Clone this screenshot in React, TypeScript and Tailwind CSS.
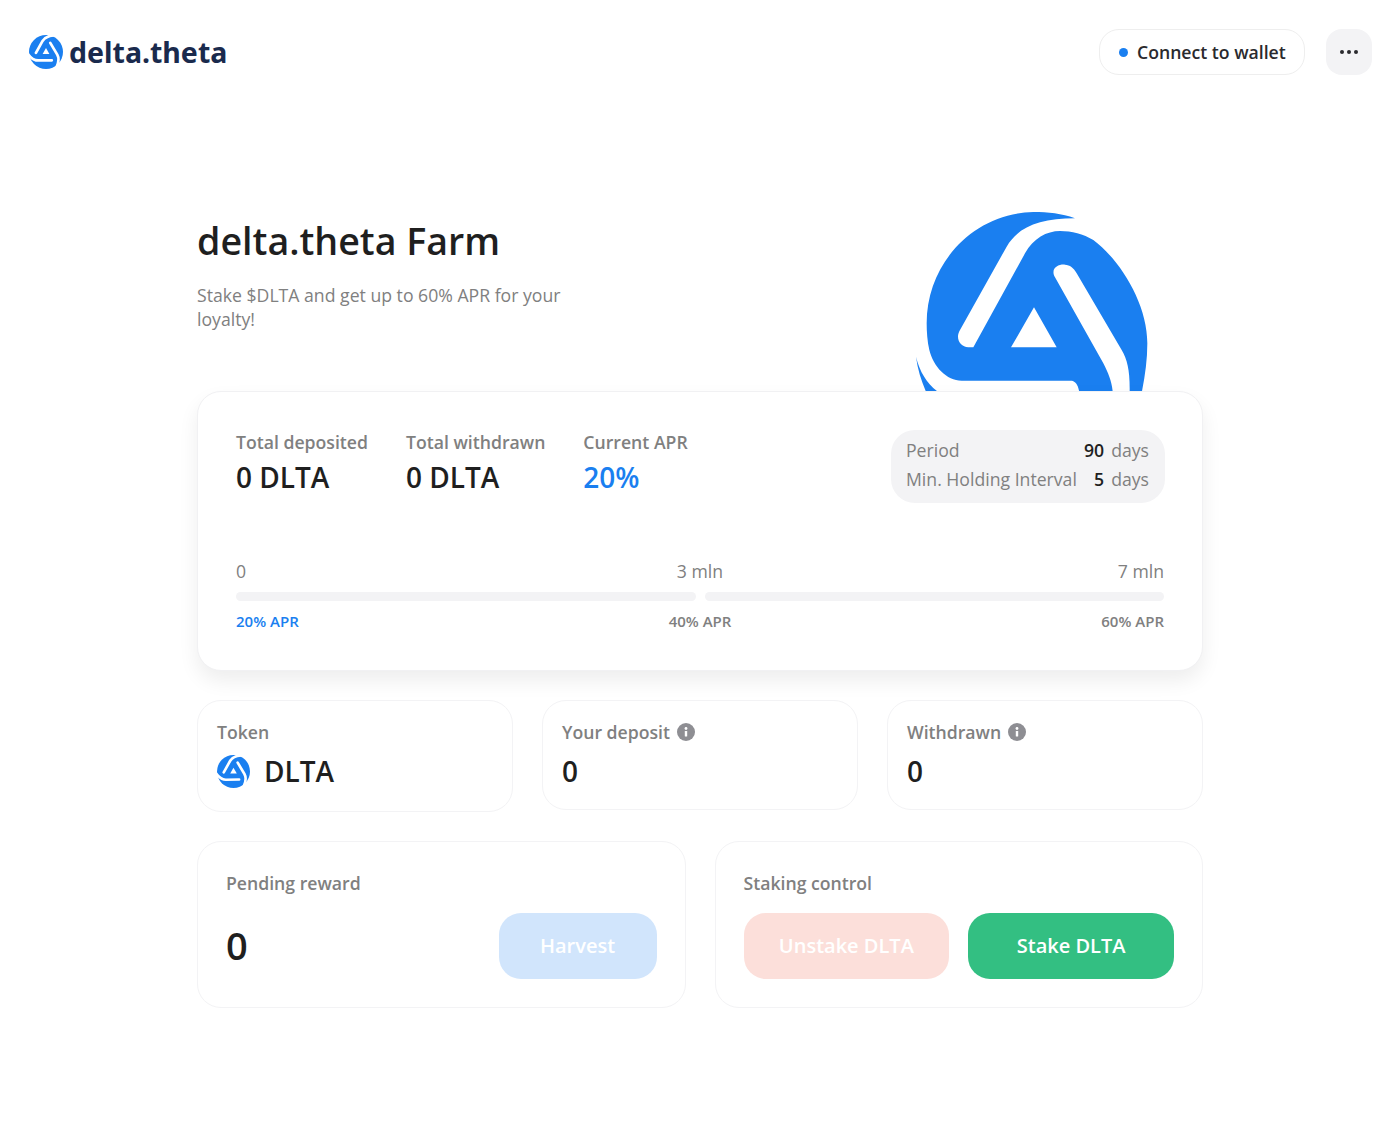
// App.tsx

const Logo = ({ className }: { className: string }) => (
  <svg viewBox="0 0 100 100" className={className}>
    <circle cx="50" cy="50" r="50" fill="#1a7ff0" />
    <path d="M50 38.4 L59.9 55.8 L40 55.8 Z" fill="#fff" />
    {[0, 120, 240].map((angle) => (
      <path
        key={angle}
        d="M20.4 52.6 L40 17.5 C45 9 53 3 72 1"
        transform={`rotate(${angle} 50 50)`}
        fill="none"
        stroke="#fff"
        strokeWidth="8"
        strokeLinecap="round"
      />
    ))}
  </svg>
);

const HeroLogo = () => (
  <svg viewBox="0 0 870 603" className="h-[201px] w-[290px]">
    <path
      fillRule="evenodd"
      fill="#1a7ff0"
      d="M555 85 C515 70 475 66 430 66 C250 70 110 220 110 400 C110 425 112 455 118 480 C130 530 170 572 215 572 L545 572 C560 575 570 590 570 640 L668 640 C672 590 660 560 640 520 L495 262 C480 235 505 222 525 224 C540 225 550 232 560 250 L695 480 C715 515 722 550 718 640 L748 640 C762 580 772 520 772 460 C772 340 690 210 610 150 C580 132 545 123 510 123 C470 123 430 145 405 190 L250 472 L235 472 C210 470 195 445 210 420 L350 170 C385 110 450 85 555 85 Z M432 352 L500 472 L363 472 Z"
    />
    <path fill="#1a7ff0" d="M78 500 C90 550 115 585 150 610 L110 610 C95 575 83 540 78 500 Z" />
  </svg>
);

const InfoIcon = () => (
  <svg viewBox="0 0 18 18" className="h-[18px] w-[18px]">
    <circle cx="9" cy="9" r="9" fill="#8e8e93" />
    <rect x="7.8" y="8" width="2.4" height="5.6" rx="0.6" fill="#fff" />
    <circle cx="9" cy="5.5" r="1.4" fill="#fff" />
  </svg>
);

const Stat = ({ label, value, blue }: { label: string; value: string; blue?: boolean }) => (
  <div>
    <div className="text-[17.65px] leading-[24px] font-semibold text-[#808080]">{label}</div>
    <div className={`mt-[4px] text-[28px] leading-[38px] font-semibold ${blue ? "text-[#1a7ff0]" : "text-[#1f1f1f]"}`}>
      {value}
    </div>
  </div>
);

const SmallCard = ({
  label,
  info,
  tall,
  children,
}: {
  label: string;
  info?: boolean;
  tall?: boolean;
  children: React.ReactNode;
}) => (
  <div className={`rounded-[24px] border border-[#f3f3f5] bg-white px-[19px] pt-[19px] ${tall ? "pb-[20px]" : "pb-[18px]"}`}>
    <div className="flex items-center gap-[7px] text-[17.65px] leading-[24px] font-semibold text-[#808080]">
      {label}
      {info && <InfoIcon />}
    </div>
    <div className="mt-[7px] flex items-center gap-[14px] text-[28px] leading-[40px] font-semibold text-[#1f1f1f]">
      {children}
    </div>
  </div>
);

const App = () => {
  return (
    <div className="h-[1121px] overflow-hidden bg-white font-['Open_Sans',sans-serif]">
      <header className="flex h-[104px] items-start justify-between pt-[29px] pr-[28px] pl-[29px]">
        <div className="flex items-center gap-[6px] pt-[6px]">
          <Logo className="h-[34px] w-[34px]" />
          <span className="font-['Noto_Sans',sans-serif] text-[28.5px] leading-[34px] font-bold text-[#1a2a4d]">
            delta.theta
          </span>
        </div>
        <div className="flex items-center gap-[21px]">
          <button className="flex h-[46px] w-[206px] items-center gap-[9px] rounded-[20px] border border-[#eeeeee] bg-white pl-[19px] text-[17.65px] font-semibold text-[#2a2a2e]">
            <span className="h-[9px] w-[9px] rounded-full bg-[#1a7ff0]" />
            Connect to wallet
          </button>
          <button className="flex h-[46px] w-[46px] items-center justify-center gap-[3px] rounded-[16px] bg-[#f3f3f5]">
            <span className="h-[4px] w-[4px] rounded-full bg-[#2a2a2e]" />
            <span className="h-[4px] w-[4px] rounded-full bg-[#2a2a2e]" />
            <span className="h-[4px] w-[4px] rounded-full bg-[#2a2a2e]" />
          </button>
        </div>
      </header>

      <main className="mx-auto w-[1006px]">
        <section className="flex h-[287px] justify-between">
          <div className="pt-[110px]">
            <h1 className="text-[37.6px] leading-[54px] font-semibold text-[#1f1f1f]">delta.theta Farm</h1>
            <p className="mt-[15px] w-[400px] text-[17.65px] leading-[24px] text-[#808080]">
              Stake $DLTA and get up to 60% APR for your loyalty!
            </p>
          </div>
          <div className="mt-[86px] mr-[23px]">
            <HeroLogo />
          </div>
        </section>

        <section className="relative h-[280px] rounded-[24px] border border-[#f1f1f3] bg-white px-[38px] pt-[38px] shadow-[0_10px_20px_rgba(0,0,0,0.07)]">
          <div className="flex items-start justify-between">
            <div className="flex gap-[38px]">
              <Stat label="Total deposited" value="0 DLTA" />
              <Stat label="Total withdrawn" value="0 DLTA" />
              <Stat label="Current APR" value="20%" blue />
            </div>
            <div className="-mr-px flex h-[73px] w-[274px] flex-col gap-[5px] rounded-[24px] bg-[#f3f3f5] pt-[8px] pr-[16px] pl-[15px] text-[17.65px] leading-[24px] text-[#808080]">
              <div className="flex justify-between">
                <span>Period</span>
                <span>
                  <b className="mr-[7px] font-semibold text-[#1f1f1f]">90</b>days
                </span>
              </div>
              <div className="flex justify-between">
                <span>Min. Holding Interval</span>
                <span>
                  <b className="mr-[7px] font-semibold text-[#1f1f1f]">5</b>days
                </span>
              </div>
            </div>
          </div>
          <div className="mt-[56px] grid grid-cols-3 text-[17.65px] leading-[24px] font-medium text-[#808080]">
            <span>0</span>
            <span className="text-center">3 mln</span>
            <span className="text-right">7 mln</span>
          </div>
          <div className="mt-[9px] flex gap-[9px]">
            <div className="h-[9px] flex-1 rounded-full bg-[#f3f3f5]" />
            <div className="h-[9px] flex-1 rounded-full bg-[#f3f3f5]" />
          </div>
          <div className="mt-[8px] grid grid-cols-3 text-[15px] leading-[24px] font-semibold text-[#808080]">
            <span className="text-[#1a7ff0]">20% APR</span>
            <span className="text-center">40% APR</span>
            <span className="text-right">60% APR</span>
          </div>
        </section>

        <section className="mt-[29px] grid grid-cols-3 items-start gap-[29px]">
          <SmallCard label="Token" tall>
            <Logo className="h-[33px] w-[33px]" />
            DLTA
          </SmallCard>
          <SmallCard label="Your deposit" info>
            0
          </SmallCard>
          <SmallCard label="Withdrawn" info>
            0
          </SmallCard>
        </section>

        <section className="mt-[29px] grid grid-cols-2 gap-[29px]">
          <div className="h-[167px] rounded-[24px] border border-[#f3f3f5] bg-white px-[28px] pt-[29px]">
            <div className="text-[17.65px] leading-[24px] font-semibold text-[#808080]">Pending reward</div>
            <div className="mt-[18px] flex items-center justify-between">
              <span className="-mt-[2px] text-[38px] font-semibold text-[#1f1f1f]">0</span>
              <button className="h-[66px] w-[158px] rounded-[22px] bg-[#d1e5fc] text-[20px] font-semibold text-white">
                Harvest
              </button>
            </div>
          </div>
          <div className="h-[167px] rounded-[24px] border border-[#f3f3f5] bg-white px-[28px] pt-[29px]">
            <div className="text-[17.65px] leading-[24px] font-semibold text-[#808080]">Staking control</div>
            <div className="mt-[18px] flex gap-[19px]">
              <button className="h-[66px] flex-1 rounded-[22px] bg-[#fcdfda] text-[20px] font-semibold text-white">
                Unstake DLTA
              </button>
              <button className="h-[66px] flex-1 rounded-[22px] bg-[#33bf82] text-[20px] font-semibold text-white">
                Stake DLTA
              </button>
            </div>
          </div>
        </section>
      </main>
    </div>
  );
};

export default App;
